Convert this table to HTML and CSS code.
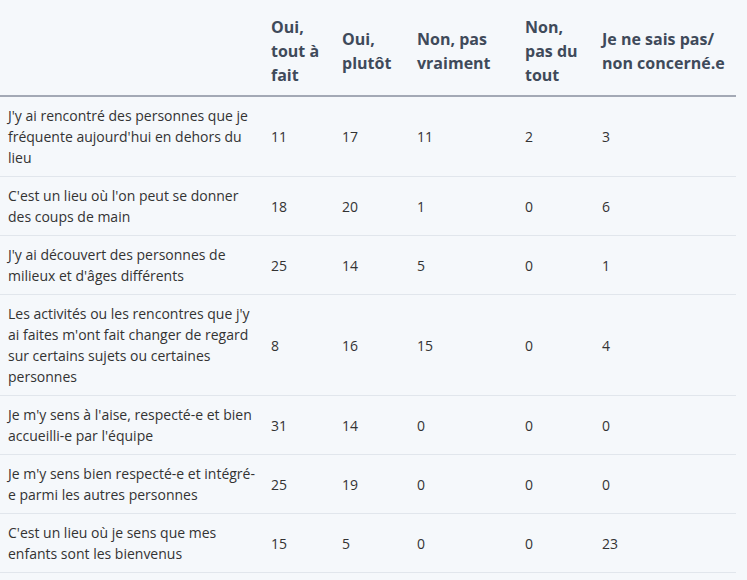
FILE: index.html
```html
<!DOCTYPE html>
<html lang="fr">
<head>
<meta charset="utf-8">
<link rel="stylesheet" href="styles.css">
</head>
<body>
<table class="survey">
  <colgroup>
    <col class="c-q"><col class="c-a"><col class="c-b"><col class="c-c"><col class="c-d"><col class="c-e">
  </colgroup>
  <thead>
    <tr>
      <th></th>
      <th>Oui, tout à fait</th>
      <th>Oui, plutôt</th>
      <th>Non, pas vraiment</th>
      <th>Non, pas du tout</th>
      <th>Je ne sais pas/ non concerné.e</th>
    </tr>
  </thead>
  <tbody>
    <tr><td>J'y ai rencontré des personnes que je fréquente aujourd'hui en dehors du lieu</td><td>11</td><td>17</td><td>11</td><td>2</td><td>3</td></tr>
    <tr><td>C'est un lieu où l'on peut se donner des coups de main</td><td>18</td><td>20</td><td>1</td><td>0</td><td>6</td></tr>
    <tr><td>J'y ai découvert des personnes de milieux et d'âges différents</td><td>25</td><td>14</td><td>5</td><td>0</td><td>1</td></tr>
    <tr><td>Les activités ou les rencontres que j'y ai faites m'ont fait changer de regard sur certains sujets ou certaines personnes</td><td>8</td><td>16</td><td>15</td><td>0</td><td>4</td></tr>
    <tr><td>Je m'y sens à l'aise, respecté-e et bien accueilli-e par l'équipe</td><td>31</td><td>14</td><td>0</td><td>0</td><td>0</td></tr>
    <tr><td>Je m'y sens bien respecté-e et intégré-e parmi les autres personnes</td><td>25</td><td>19</td><td>0</td><td>0</td><td>0</td></tr>
    <tr><td>C'est un lieu où je sens que mes enfants sont les bienvenus</td><td>15</td><td>5</td><td>0</td><td>0</td><td>23</td></tr>
  </tbody>
</table>
</body>
</html>
```
FILE: styles.css
```css
html, body {
  margin: 0;
  padding: 0;
  background: #f5f8fb;
}
body {
  font-family: "Open Sans", "Liberation Sans", sans-serif;
  font-size: 14px;
  line-height: 21px;
  color: #333;
}
.survey {
  width: 736px;
  border-collapse: collapse;
  table-layout: fixed;
}
.c-q { width: 263px; }
.c-a { width: 71px; }
.c-b { width: 75px; }
.c-c { width: 108px; }
.c-d { width: 77px; }
.c-e { width: 142px; }
.survey th {
  text-align: left;
  vertical-align: middle;
  font-weight: 700;
  font-size: 16px;
  line-height: 24px;
  color: #3f4a5a;
  padding: 15px 8px 8px;
  border-bottom: 2px solid #a3a9b5;
}
.survey td {
  vertical-align: middle;
  text-align: left;
  padding: 8px 8px;
  border-bottom: 1px solid #e1e6ec;
}
```
